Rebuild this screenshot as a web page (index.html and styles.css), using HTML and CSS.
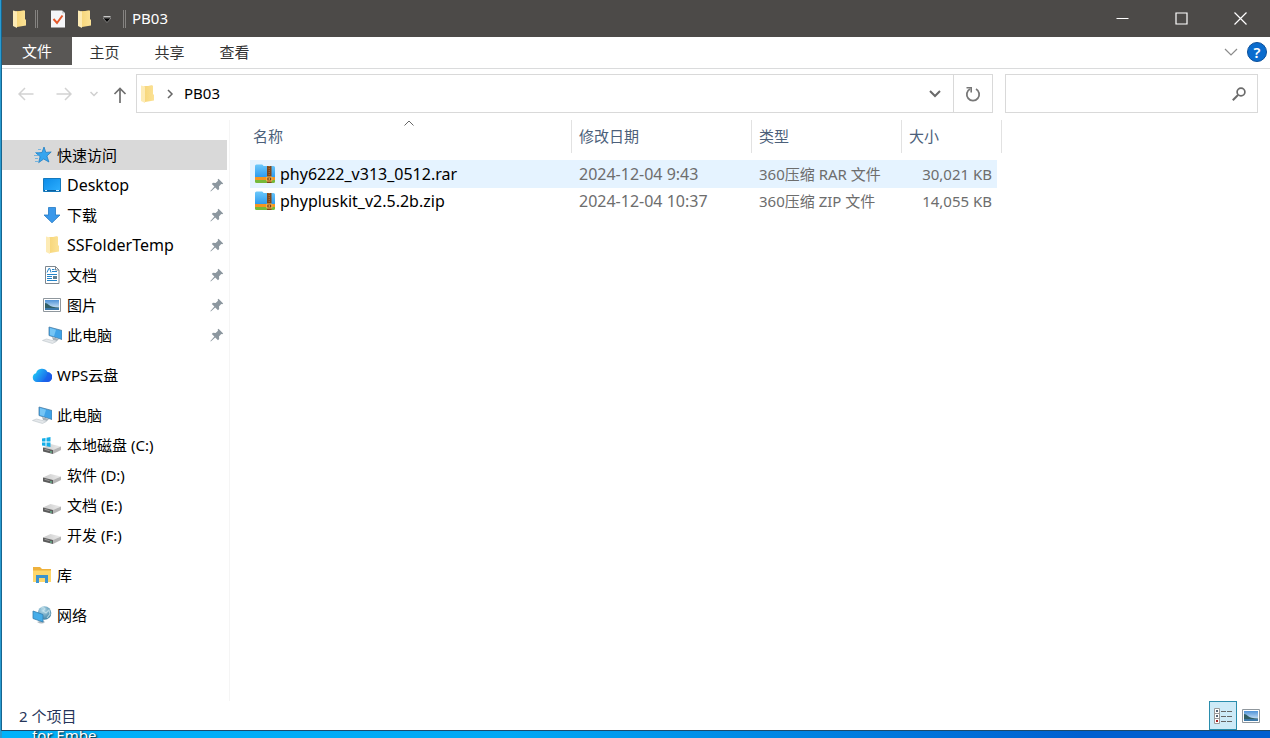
FILE: index.html
```html
<!DOCTYPE html>
<html lang="zh-CN">
<head>
<meta charset="utf-8">
<title>PB03</title>
<link rel="stylesheet" href="styles.css">
</head>
<body class="desktop">
<svg class="sprite" aria-hidden="true">
  <defs>
    <linearGradient id="gFolder" x1="0" x2="1"><stop offset="0" stop-color="#f7d67a"/><stop offset="1" stop-color="#fbe296"/></linearGradient>
    <linearGradient id="gBlue" x1="0" y1="0" x2="1" y2="1"><stop offset="0" stop-color="#0b8be8"/><stop offset="1" stop-color="#2fb0ff"/></linearGradient>
    <linearGradient id="gCloud" x1="0" x2="1" y1="0" y2="0.5"><stop offset="0" stop-color="#1fe0f4"/><stop offset=".45" stop-color="#1f9cf2"/><stop offset="1" stop-color="#1857e8"/></linearGradient>
    <linearGradient id="gDrive" x1="0" x2="1"><stop offset="0" stop-color="#c9c9c9"/><stop offset="1" stop-color="#ececec"/></linearGradient>
    <linearGradient id="gZip" x1="0" y1="0" x2="0" y2="1"><stop offset="0" stop-color="#6cc8fa"/><stop offset="1" stop-color="#2a98ee"/></linearGradient>
    <linearGradient id="gSky" x1="0" y1="0" x2="0" y2="1"><stop offset="0" stop-color="#4f93d8"/><stop offset="1" stop-color="#e6f3fb"/></linearGradient>
    <radialGradient id="gGlobe" cx=".4" cy=".3" r=".8"><stop offset="0" stop-color="#b6dcec"/><stop offset="1" stop-color="#33789c"/></radialGradient>
  </defs>
  <symbol id="folder" viewBox="0 0 20 20">
    <path d="M7 2.500l8-1V16l-8 1z" fill="#f3c95f"/>
    <path d="M7 2.500l9-1V10l1 1v5.500l-9 1.500z" fill="url(#gFolder)"/>
    <path d="M4 1.500l4 1V19l-4-2z" fill="#fdebb5"/>
  </symbol>
  <symbol id="star" viewBox="0 0 20 20">
    <path d="M12 2l1.800 5.400 5.400-.4-4.300 4 2 6-5.200-3-5 3.600 1.400-6L4 8l6-.5z" fill="#35a5ef" stroke="#1f7fc4" stroke-width=".8"/>
    <path d="M3 7.500h3M2 10.500h4M3 13.500h3M3 16.500h3M6 4.500h3" stroke="#4aa5df" stroke-width=".7"/>
  </symbol>
  <symbol id="desktop" viewBox="0 0 20 20">
    <path d="M1.500 3.500h17v13h-17z" fill="url(#gBlue)" stroke="#1479bd"/>
    <path d="M2 15.500h16" stroke="#0b5f9f"/><path d="M3 15.500h2M14 15.500h3" stroke="#d3efff"/>
  </symbol>
  <symbol id="download" viewBox="0 0 20 20">
    <path d="M6.500 2.500h7V10h4.500l-8 7.800L2 10h4.500z" fill="#3a98ea" stroke="#2279c4" stroke-width=".8"/>
  </symbol>
  <symbol id="document" viewBox="0 0 20 20">
    <path d="M3.500 1.500h10l3.500 3.500v13.500H3.500z" fill="#fff" stroke="#7d8790"/>
    <path d="M13.500 1.500V5H17" fill="none" stroke="#7d8790"/>
    <path d="M5 7.500L6.800 3.500h1L9 7.500M10 4.500h2.500M10 6.500h5M5 9.500h10" fill="none" stroke="#2484c9"/>
    <path d="M5 11.500h5M5 13.500h5M5 15.500h10" stroke="#2484c9"/><path d="M11 11h4v3h-4z" fill="#5d7f93"/>
  </symbol>
  <symbol id="picture" viewBox="0 0 20 20">
    <path d="M1.500 3.500h17v13h-17z" fill="#fff" stroke="#8f979d"/>
    <path d="M3 5h14v10H3z" fill="url(#gSky)"/>
    <path d="M3 8q2 0 4 2t10 2.500V15H3z" fill="#315f65"/><path d="M3 13h14v2H3z" fill="#3c78a8"/>
  </symbol>
  <symbol id="computer" viewBox="0 0 20 20">
    <path d="M7 2l13 3.500v9L7 10.500z" fill="#3fa3e8" stroke="#4b7fa5" stroke-width=".8"/>
    <path d="M8 3l6 1.700-2 6.500-4-1.200z" fill="#75c5f5"/>
    <path d="M10 12l7 2-2 2-4-1z" fill="#a7b2ba"/>
    <path d="M.5 15.500L4.500 14l10 2.500-4 2z" fill="#e3e7ea" stroke="#bcc4c9" stroke-width=".6"/>
  </symbol>
  <symbol id="cloud" viewBox="0 0 20 20">
    <path d="M5 17a4.500 4.500 0 0 1-1-8.800A6.300 6.300 0 0 1 15.500 7 5 5 0 0 1 15 17z" fill="url(#gCloud)"/>
    <path d="M15.500 7A5 5 0 0 1 15 17H9q6-3 6.500-10z" fill="#1d5fea" opacity=".6"/>
  </symbol>
  <symbol id="drive" viewBox="0 0 20 20">
    <path d="M1 12.500l7.500-3.500L19 11.500l-8 4z" fill="url(#gDrive)"/>
    <path d="M1 12.500l10 2.500v4L1 16.500z" fill="#5c5c5c"/>
    <path d="M11 15l8-3.500V15l-8 4z" fill="#b5b5b5"/>
    <path d="M2.500 14.300l5 1.300" stroke="#999"/><path d="M8 17h2" stroke="#6bd7a0"/>
  </symbol>
  <symbol id="sysdrive" viewBox="0 0 20 20">
    <use href="#drive"/>
    <path d="M0 3.500l3.500-.5v3.500H0zM4.500 2.800L8.500 2v4.500h-4zM0 7.500h3.500V11L0 10.500zM4.500 7.500h4V12l-4-.8z" fill="#15aee8"/>
  </symbol>
  <symbol id="library" viewBox="0 0 20 20">
    <path d="M1 2h7l2 2h9v13H1z" fill="#eeb13c"/><path d="M1 5.500h18V17H1z" fill="#ffd76b"/>
    <path d="M4 18v-8h12v8h-3v-5H7v5z" fill="#3d94cf"/>
  </symbol>
  <symbol id="network" viewBox="0 0 20 20">
    <circle cx="12.500" cy="8" r="6.800" fill="url(#gGlobe)"/>
    <path d="M9 3q3-1 4 1l-2 2 3 2 3-3 1 4-3 4" fill="none" stroke="#d0e8ee" stroke-width="1.200" opacity=".7"/>
    <path d="M5 17q5 3 8 0l-3-2z" fill="#aeb9c0"/>
    <path d="M1 6l10 3.500v7.500L1 13.500z" fill="#45ade9" stroke="#327faf" stroke-width=".8"/>
  </symbol>
  <symbol id="pin" viewBox="0 0 14 14">
    <path d="M8.500.8l4.700 4.700-1 .8-1-.2-2.200 2.300.2 2.600-1.200 1.200-2.800-2.800-4.400 4-.4-.4 4-4.400L1.800 6l1.200-1.200 2.600.2L8 2.800l-.4-1z" fill="#8c979f"/>
  </symbol>
  <symbol id="archive" viewBox="0 0 20 20">
    <path d="M0 2q0-1.500 1.500-1.500h5.500q1 0 1.500 1.500H18.500q1.500 0 1.500 1.500V14H0z" fill="url(#gZip)"/>
    <path d="M0 13h20v3H0z" fill="#f5951f"/><path d="M0 16h20v1.500q0 1.500-1.500 1.500h-17Q0 19 0 17.500z" fill="#76b93a"/>
    <path d="M12 2h4.500v17H12z" fill="#824719"/><path d="M14.200 2v10" stroke="#b77738" stroke-dasharray="1 1"/>
    <path d="M11.800 13h5v4h-5z" fill="#7a3c10" stroke="#ffc25a"/><path d="M14.200 14v2" stroke="#ffc25a"/>
  </symbol>
</svg>

<div class="desktop-label">for Embe</div>

<div class="window">
  <header class="titlebar">
    <div class="quick-tools">
      <svg class="icon"><use href="#folder"/></svg>
      <span class="bar"></span>
      <button class="tool" aria-label="属性"><svg class="icon" viewBox="0 0 20 20"><path d="M3 1.500h11l3 2.500v14.500H3z" fill="#f5f6f8"/><path d="M14 1.500L17 4.500h-3z" fill="#c9cdd2"/><path d="M5.500 10l3.500 4 5.500-7.500" fill="none" stroke="#e4582b" stroke-width="2"/></svg></button>
      <button class="tool" aria-label="新建文件夹"><svg class="icon"><use href="#folder"/></svg></button>
      <button class="tool more" aria-label="自定义快速访问工具栏"><svg width="8" height="8" viewBox="0 0 8 8"><path d="M.5 1.500h7" stroke="#c8c8c8"/><path d="M0 3h8L4 7.500z" fill="#000" stroke="#bbb" stroke-width=".6"/></svg></button>
      <span class="bar"></span>
    </div>
    <h1 class="title">PB03</h1>
    <div class="window-buttons">
      <button aria-label="最小化"><svg width="13" height="13"><path d="M.5 6.500h12" stroke="#fff"/></svg></button>
      <button aria-label="最大化"><svg width="13" height="13"><path d="M1 1h11v11H1z" fill="none" stroke="#fff" stroke-width="1.200"/></svg></button>
      <button aria-label="关闭"><svg width="13" height="13"><path d="M.5.5l12 12M12.500.5l-12 12" stroke="#fff" stroke-width="1.200"/></svg></button>
    </div>
  </header>

  <nav class="ribbon">
    <button class="tab file">文件</button>
    <button class="tab">主页</button>
    <button class="tab">共享</button>
    <button class="tab">查看</button>
    <div class="ribbon-end">
      <button aria-label="展开功能区"><svg width="14" height="8"><path d="M1 1l6 6 6-6" fill="none" stroke="#8c8c8c" stroke-width="1.200"/></svg></button>
      <button class="help" aria-label="帮助">?</button>
    </div>
  </nav>

  <div class="addressbar">
    <div class="history">
      <button aria-label="返回"><svg width="16" height="14"><path d="M15.500 7H1M7 1L1 7l6 6" fill="none" stroke="#d2d2d2" stroke-width="1.500"/></svg></button>
      <button aria-label="前进"><svg width="16" height="14"><path d="M.5 7H15M9 1l6 6-6 6" fill="none" stroke="#d2d2d2" stroke-width="1.500"/></svg></button>
      <button class="recent" aria-label="最近位置"><svg width="8" height="6"><path d="M.5 1L4 4.500 7.500 1" fill="none" stroke="#cfcfcf" stroke-width="1.500"/></svg></button>
      <button class="up" aria-label="向上"><svg width="14" height="16"><path d="M7 16V1.500M1.500 7L7 1.500 12.500 7" fill="none" stroke="#6f6f6f" stroke-width="1.700"/></svg></button>
    </div>
    <div class="path">
      <svg class="icon"><use href="#folder"/></svg>
      <svg class="crumb-arrow" width="7" height="10"><path d="M1 1l4 4-4 4" fill="none" stroke="#666" stroke-width="1.500"/></svg>
      <a class="crumb" href="#">PB03</a>
      <button class="drop" aria-label="上一个位置"><svg width="12" height="8"><path d="M1 1l5 5 5-5" fill="none" stroke="#6a6a6a" stroke-width="2"/></svg></button>
      <button class="refresh" aria-label="刷新"><svg width="16" height="16"><path d="M11 3A6.200 6.200 0 1 1 5 3" fill="none" stroke="#777" stroke-width="1.800"/><path d="M1.500 1.800H6.200V6.500" fill="none" stroke="#777" stroke-width="1.600"/></svg></button>
    </div>
    <div class="search">
      <input type="search" aria-label="搜索">
      <svg width="14" height="14"><circle cx="9" cy="5" r="3.900" fill="none" stroke="#6b6b6b" stroke-width="1.700"/><path d="M6 8L.8 13.200" stroke="#6b6b6b" stroke-width="2"/></svg>
    </div>
  </div>

  <div class="main">
    <nav class="tree">
      <ul>
        <li><a class="selected" href="#"><svg class="icon"><use href="#star"/></svg>快速访问</a>
          <ul>
            <li><a class="latin" href="#"><svg class="icon"><use href="#desktop"/></svg>Desktop<svg class="pin"><use href="#pin"/></svg></a></li>
            <li><a href="#"><svg class="icon"><use href="#download"/></svg>下载<svg class="pin"><use href="#pin"/></svg></a></li>
            <li><a class="latin" href="#"><svg class="icon"><use href="#folder"/></svg>SSFolderTemp<svg class="pin"><use href="#pin"/></svg></a></li>
            <li><a href="#"><svg class="icon"><use href="#document"/></svg>文档<svg class="pin"><use href="#pin"/></svg></a></li>
            <li><a href="#"><svg class="icon"><use href="#picture"/></svg>图片<svg class="pin"><use href="#pin"/></svg></a></li>
            <li><a href="#"><svg class="icon"><use href="#computer"/></svg>此电脑<svg class="pin"><use href="#pin"/></svg></a></li>
          </ul>
        </li>
        <li><a href="#"><svg class="icon"><use href="#cloud"/></svg>WPS云盘</a></li>
        <li><a href="#"><svg class="icon"><use href="#computer"/></svg>此电脑</a>
          <ul class="drives">
            <li><a href="#"><svg class="icon"><use href="#sysdrive"/></svg>本地磁盘 (C:)</a></li>
            <li><a href="#"><svg class="icon"><use href="#drive"/></svg>软件 (D:)</a></li>
            <li><a href="#"><svg class="icon"><use href="#drive"/></svg>文档 (E:)</a></li>
            <li><a href="#"><svg class="icon"><use href="#drive"/></svg>开发 (F:)</a></li>
          </ul>
        </li>
        <li><a href="#"><svg class="icon"><use href="#library"/></svg>库</a></li>
        <li><a href="#"><svg class="icon"><use href="#network"/></svg>网络</a></li>
      </ul>
    </nav>

    <section class="files">
      <table>
        <colgroup><col class="c-name"><col class="c-date"><col class="c-type"><col class="c-size"></colgroup>
        <thead>
          <tr>
            <th><div class="head">名称<svg class="sort" width="10" height="6"><path d="M.5 5.500L5 1l4.500 4.500" fill="none" stroke="#666"/></svg></div></th>
            <th><div class="head">修改日期</div></th>
            <th><div class="head">类型</div></th>
            <th><div class="head">大小</div></th>
          </tr>
        </thead>
        <tbody>
          <tr class="hover"><td><div class="name latin"><svg class="icon"><use href="#archive"/></svg>phy6222_v313_0512.rar</div></td><td class="latin">2024-12-04 9:43</td><td>360压缩 RAR 文件</td><td>30,021 KB</td></tr>
          <tr><td><div class="name latin"><svg class="icon"><use href="#archive"/></svg>phypluskit_v2.5.2b.zip</div></td><td class="latin">2024-12-04 10:37</td><td>360压缩 ZIP 文件</td><td>14,055 KB</td></tr>
        </tbody>
      </table>
    </section>
  </div>

  <footer class="statusbar">
    <span>2 个项目</span>
    <div class="views">
      <button class="active" aria-label="详细信息"><svg width="20" height="18"><path d="M1.500 1.500h5v15h-5zM1.500 6.500h5M1.500 11.500h5" fill="#fff" stroke="#9a9a9a"/><path d="M3 3h2v2H3zM3 8h2v2H3z" fill="#567"/><path d="M3 13h2v2H3z" fill="#a22"/><path d="M8 4.500h5M14 4.500h5M8 9.500h5M14 9.500h5M8 14.500h5M14 14.500h5" stroke="#666"/></svg></button>
      <button aria-label="大缩略图"><svg class="icon"><use href="#picture"/></svg></button>
    </div>
  </footer>
</div>
</body>
</html>
```

FILE: styles.css
```css
* { box-sizing: border-box; }

body, button, input {
  font-family: "Noto Sans", "Noto Sans CJK SC", sans-serif;
  font-size: 15px;
  line-height: 20px;
}

button {
  display: flex;
  align-items: center;
  justify-content: center;
  padding: 0;
  border: 0;
  background: none;
  color: inherit;
}

a { color: inherit; text-decoration: none; }
ul { margin: 0; padding: 0; list-style: none; }
svg { display: block; flex: none; }
.sprite { position: absolute; width: 0; height: 0; }
.icon { width: 20px; height: 20px; }

.desktop {
  position: relative;
  height: 100vh;
  margin: 0;
  padding: 0 0 7px 1px;
  overflow: hidden;
  background: linear-gradient(90deg, #2a9bd0 0, #2a9bd0 2px, #00b2fa 2px, #00a8f5 40%, #0060d0 85%);
}

.desktop-label {
  position: absolute;
  left: 32px;
  bottom: -7px;
  color: #fff;
  text-shadow: 1px 1px 2px #000;
}

.window {
  position: relative;
  display: flex;
  flex-direction: column;
  height: 100%;
  border-left: 1px solid #17658f;
  border-bottom: 1px solid #1d4b6b;
  background: #fff;
  color: #000;
}

.titlebar {
  display: flex;
  align-items: center;
  height: 37px;
  flex: none;
  background: #4c4a48;
  color: #fff;
}
.quick-tools { display: flex; align-items: center; padding-left: 7px; }
.quick-tools .bar { width: 3px; height: 18px; margin: 0 6px; border: 1px solid #858381; border-width: 0 1px; }
.tool { width: 26px; height: 26px; }
.tool:first-of-type { margin-left: 1px; }
.tool.more { width: 20px; }
.title { margin: 0; padding-bottom: 2px; font-size: 15px; font-weight: 400; }
.window-buttons { display: flex; margin-left: auto; }
.window-buttons button { width: 59px; height: 37px; }

.ribbon {
  display: flex;
  align-items: flex-start;
  height: 32px;
  flex: none;
  border-bottom: 1px solid #dadbdc;
  color: #333;
}
.tab { width: 65px; height: 30px; }
.tab.file { width: 70px; height: 28px; background: #595755; color: #fff; }
.ribbon-end { display: flex; align-items: center; gap: 9px; height: 30px; margin-left: auto; padding-right: 3px; }
.help {
  width: 20px;
  height: 20px;
  border: 1px solid #0b4f9a;
  border-radius: 50%;
  background: #0a6cce;
  color: #fff;
  font-weight: 600;
}

.addressbar { display: flex; flex: none; padding: 5px 12px 0 0; }
.history { display: flex; align-items: center; width: 134px; padding-left: 16px; }
.history button { width: 16px; margin-right: 22px; }
.history .recent { width: 8px; margin: 0 15px 0 -4px; }
.history .up { width: 14px; margin: 2px 0 0; }
.path { display: flex; align-items: center; flex: 1; height: 39px; border: 1px solid #d9d9d9; }
.crumb-arrow { margin: 0 10px; }
.crumb { margin-right: auto; padding-bottom: 2px; }
.drop { width: 36px; height: 37px; }
.refresh { width: 39px; height: 37px; border-left: 1px solid #d9d9d9; }
.search { display: flex; align-items: center; width: 253px; height: 39px; margin-left: 12px; padding-right: 11px; border: 1px solid #d9d9d9; }
.search input { flex: 1; min-width: 0; height: 37px; border: 0; outline: 0; background: none; }

.main { display: flex; flex: 1; min-height: 0; }
.latin { font-size: 16px; }

.tree { width: 228px; flex: none; margin-top: 7px; padding: 20px 2px 0 0; border-right: 1px solid #f5f5f5; }
.tree > ul { display: grid; gap: 10px; }
.tree a { display: flex; align-items: center; gap: 5px; height: 30px; padding: 0 3px 0 30px; }
.tree ul ul a { padding-left: 40px; }
.tree .selected { background: #d9d9d9; }
.pin { width: 14px; height: 14px; margin-left: auto; }

.files { flex: 1; padding: 7px 0 0 20px; }
.files table { width: 752px; table-layout: fixed; border-collapse: separate; border-spacing: 0; }
.c-name { width: 322px; }
.c-date { width: 180px; }
.c-type { width: 150px; }
.c-size { width: 100px; }
.files th { padding: 0 0 7px; font-weight: 400; text-align: left; color: #4c607a; }
.head { position: relative; height: 33px; padding: 6px 0 0 7px; border-right: 1px solid #e2e2e2; }
.files th:first-child .head { padding-left: 3px; }
.sort { position: absolute; left: 50%; top: 0; margin-left: -7px; }
.files td { height: 27px; padding: 0 0 1px 7px; color: #6d6d6d; white-space: nowrap; }
.files td:first-child { padding-left: 5px; color: #000; }
.files td:last-child { padding-right: 5px; border-right: 5px solid transparent; background-clip: padding-box; text-align: right; }
.files .hover td { height: 28px; padding-bottom: 0; background-color: #e5f3ff; }
.name { display: flex; align-items: center; gap: 5px; }

.statusbar { display: flex; align-items: center; height: 29px; flex: none; padding: 0 5px 0 17px; color: #26355a; }
.views { display: flex; margin-left: auto; }
.views button { width: 28px; height: 29px; }
.views .active { border: 1px solid #2a8dad; background: #cdeaf7; }
```
